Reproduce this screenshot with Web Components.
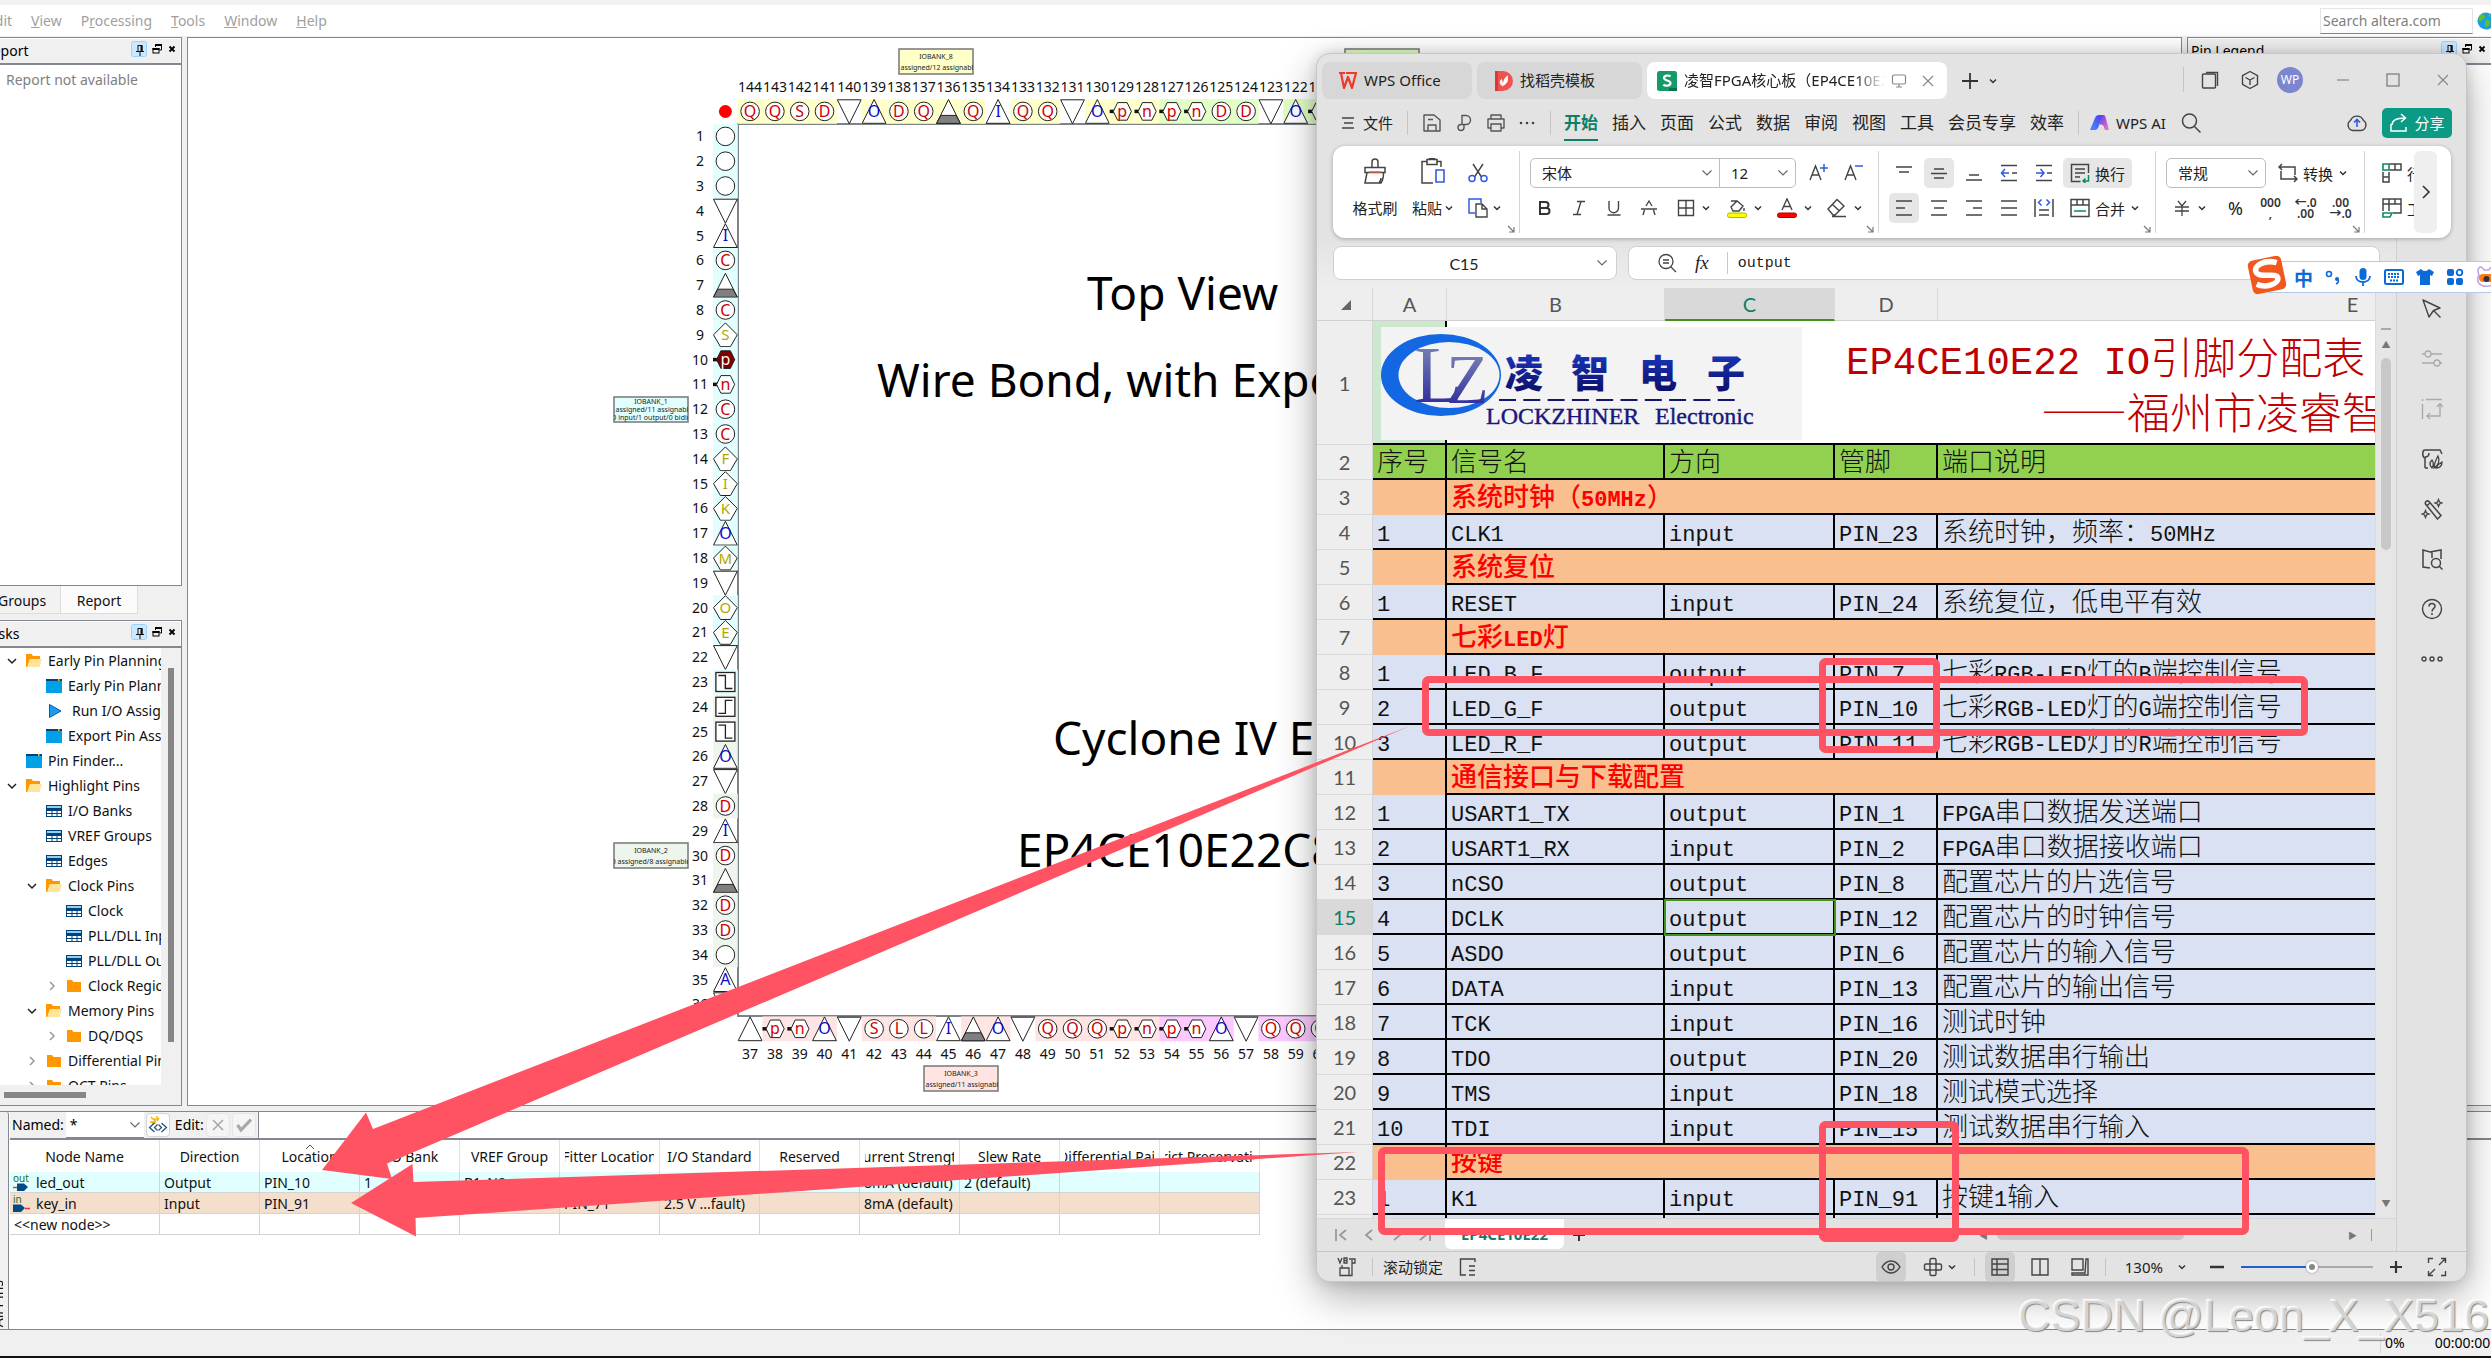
<!DOCTYPE html>
<html lang="zh-CN">
<head>
<meta charset="utf-8">
<title>Pin Planner</title>
<style>
html,body{margin:0;height:100%;overflow:hidden;background:#f0f0f0}
body{font-family:"Noto Sans","Noto Sans CJK SC",sans-serif;font-size:14px;color:#111}
</style>
</head>
<body>
<planner-app></planner-app>
<wps-window></wps-window>
<ime-bar></ime-bar>
<callout-layer></callout-layer>
<water-mark>CSDN @Leon_X_X516</water-mark>
<script>
const BASE = `:host,*{box-sizing:border-box}button,select,input{font:inherit;color:inherit;background:none;border:0;padding:0;margin:0;border-radius:0;outline:0}
button{display:flex;align-items:center;justify-content:center}select{appearance:none}a{color:inherit;text-decoration:none}`;
function define(tag, css, html) {
  customElements.define(tag, class extends HTMLElement {
    connectedCallback() {
      if (this.shadowRoot) return;
      const t = document.createElement('template');
      t.innerHTML = `<style>${BASE}${css}</style>` + (typeof html === 'function' ? html(this) : html);
      this.attachShadow({mode: 'open'}).append(t.content.cloneNode(true));
    }
  });
}

/* ---------- icons: name -> [viewBox size, markup] ---------- */
const ICONS = {
  pin: [16, '<rect x=".5" y=".5" width="15" height="15" rx="2" fill="#cce8ff" stroke="#99d1ff"/><path d="M7 4.500h4v6M7 4v6.500M5 10.500h8M9 11v4" stroke="#111" fill="none"/><path d="M10.500 4v6.500" stroke="#111" stroke-width="2"/>'],
  float: [12, '<path d="M4.500 4V2h6v5H8.500" stroke="#000" fill="none"/><path d="M4 2h7" stroke="#000" stroke-width="2"/><rect x="2" y="5.500" width="6" height="4.500" fill="none" stroke="#000"/><path d="M1.500 6h7" stroke="#000" stroke-width="2"/>'],
  cross: [10, '<path d="M2.500 2.500l5 5M7.500 2.500l-5 5" stroke="#000" stroke-width="1.800"/>'],
  open: [16, '<path d="M0 14V1h5.500l1.500 2h7v3H4L1.500 14z" fill="#ff9800"/><path d="M4 6h12l-2.500 8H1.200z" fill="#ffe49c"/>'],
  folder: [16, '<path d="M1 2h5l1.500 2H15v10H1z" fill="#ff9800"/>'],
  win: [16, '<path d="M0 1h16v14H0z" fill="#00a0e6"/><path d="M0 1h16v2H0z" fill="#00437c"/><path d="M12 1h1.500v2H12z" fill="#ffb41e"/>'],
  play: [16, '<path d="M3.500 1.500L15 8 3.500 14.500z" fill="#1a9bf0" stroke="#0a58b0"/>'],
  table: [16, '<path d="M0 2h16v12H0z" fill="#00437c"/><path d="M1 3h14v2H1z" fill="#8fd0f5"/><path d="M1 8h4.500v2H1zM6.500 8h4v2h-4zM11.500 8H15v2h-3.500zM1 11h4.500v2H1zM6.500 11h4v2h-4zM11.500 11H15v2h-3.500z" fill="#fff"/>'],
  down: [12, '<path d="M2 4l4 4 4-4" fill="none" stroke="#222" stroke-width="1.500"/>'],
  thin: [12, '<path d="M1.500 3.500L6 8l4.500-4.500" fill="none" stroke="#666" stroke-width="1.100"/>'],
  chev: [10, '<path d="M2 3.500l3 3 3-3" fill="none" stroke="#333" stroke-width="1.500"/>'],
  right: [12, '<path d="M4 2l4 4-4 4" fill="none" stroke="#999" stroke-width="1.500"/>'],
  up: [10, '<path d="M1 7l4-4 4 4" fill="none" stroke="#555"/>'],
  find: [20, '<path d="M3 2l3 3M9 1v4M2 7h4M11 3L9 6M4 9l3-3M7 3v6" stroke="#f5b800" stroke-width="1.500"/><path d="M6.500 8l-5 4.500 5 4.500M9.500 9.500l-3 3 3 3M10.500 9.500l3 3-3 3M13.500 8l5 4.500-5 4.500" fill="none" stroke="#234d74" stroke-width="1.200"/>'],
  gx: [16, '<path d="M3 3l10 10M13 3L3 13" stroke="#a5a5a5" stroke-width="1.500"/>'],
  gok: [16, '<path d="M1.500 8l3.500 5L15 2.500" fill="none" stroke="#a8a8a8" stroke-width="3.200"/>'],
  out: [18, '<path d="M4 10.500h7l4 3.500-4 4H4z" fill="#004a86"/><path d="M0 14.500h4" stroke="#e33" stroke-width="1.500"/>'],
  in: [18, '<path d="M0 10.500h8l4 3.500-4 4H0z" fill="#004a86"/><path d="M12 14.500h5" stroke="#e33" stroke-width="1.500"/>'],
  globe: [18, '<circle cx="9" cy="9" r="8.500" fill="#1b9be8"/><path d="M3 3c3-2 5 0 5 2s-3 2-3 4-3-1-4-2zM9 8c3-1 5 1 4 3s-2 5-4 4-1-5 0-7zM11 1l4 3-3 1z" fill="#59c22c"/>'],
  wps: [22, '<path d="M2 3h6M4 3l3 15 4-11 4 11L19 3M9 3h11" fill="none" stroke="#ee3a2b" stroke-width="2.200" stroke-linejoin="round"/>'],
  docer: [22, '<path d="M3 1h8a10 10 0 010 20H3z" fill="#ef5350"/><path d="M3 1h3v20H3z" fill="#d83a3a"/><path d="M11 16C7 14 8 11 9.500 9.500 10 12 11 13 11 16zM11.500 15c0-4 1-7 4-9 0 4 .500 7-4 9z" fill="#fff" stroke="#fff"/>'],
  sheet: [22, '<rect x="1" y="1" width="20" height="20" rx="2.500" fill="#159a68"/><path d="M13 21h8v-3h-8z" fill="#0a7049"/><path d="M14.500 6.500C13 5 8 5 8 8s6.500 2 6.500 5-5.500 3.500-7 1.500" fill="none" stroke="#fff" stroke-width="2.200"/>'],
  monitor: [16, '<rect x="1.500" y="2" width="13" height="9" rx="1.500" fill="none" stroke="#888" stroke-width="1.200"/><path d="M5 14h6M8 11v3" stroke="#888" stroke-width="1.200"/>'],
  x: [14, '<path d="M2 2l10 10M12 2L2 12" stroke="#888" stroke-width="1.200"/>'],
  plus: [18, '<path d="M9 1v16M1 9h16" stroke="#333" stroke-width="1.800"/>'],
  zplus: [14, '<path d="M7 1v12M1 7h12" stroke="#333" stroke-width="2.200"/>'],
  windows: [20, '<path d="M6 2.500h11.500V16" fill="none" stroke="#444" stroke-width="1.400"/><rect x="2.500" y="4" width="13" height="14" rx="1" fill="none" stroke="#444" stroke-width="1.400"/>'],
  cube: [20, '<path d="M10 1.500l7.500 4.200v8.600L10 18.500l-7.500-4.200V5.700zM5.500 7.500L10 10l4.500-2.500M10 10v5" fill="none" stroke="#444" stroke-width="1.400" stroke-linejoin="round"/>'],
  min: [14, '<path d="M1 7h12" stroke="#777" stroke-width="1.200"/>'],
  max: [14, '<rect x="1" y="1" width="12" height="12" fill="none" stroke="#777" stroke-width="1.200"/>'],
  burger: [14, '<path d="M1 2h12M3 7h9M1 12h12" stroke="#444" stroke-width="1.300"/>'],
  save: [20, '<path d="M2 2h10l6 5v11H2zM6 18v-6h8v6M6 6.500h5" fill="none" stroke="#555" stroke-width="1.400" stroke-linejoin="round"/>'],
  pdf: [20, '<path d="M8 11V2.500h4a4.500 4.500 0 010 9H7M7 11.500a3 3 0 103 3v-3" fill="none" stroke="#555" stroke-width="1.400"/>'],
  print: [20, '<path d="M5 6V2h10v4M5 15H2V6h16v9h-3M5 11h10v7H5z" fill="none" stroke="#555" stroke-width="1.400" stroke-linejoin="round"/>'],
  dots: [18, '<circle cx="3" cy="9" r="1.300" fill="#444"/><circle cx="9" cy="9" r="1.300" fill="#444"/><circle cx="15" cy="9" r="1.300" fill="#444"/>'],
  ai: [20, '<defs><linearGradient id="a" x1="0" y1="1" x2="1" y2="0"><stop offset="0" stop-color="#4b8bff"/><stop offset="1" stop-color="#4a3cf0"/></linearGradient><linearGradient id="b" x1="0" y1="0" x2="1" y2="1"><stop offset="0" stop-color="#5a3cf5"/><stop offset="1" stop-color="#ff7bb0"/></linearGradient></defs><path d="M0 17L5 5q1-3 4-3h4L8 15q-1 2-3 2z" fill="url(#a)"/><path d="M12 2h1.500q1.500 0 2 2L19 17h-4l-1.500-4q-.5-1.500-2.500-1.500H9.500z" fill="url(#b)"/>'],
  search: [22, '<circle cx="9.500" cy="9" r="7" fill="none" stroke="#444" stroke-width="1.500"/><path d="M14.500 14.500l6 6" stroke="#444" stroke-width="1.500"/>'],
  cloud: [22, '<path d="M7 18.500a5.500 5.500 0 01-2.500-10 7 7 0 0113 0A5.500 5.500 0 0115 18.500z" fill="none" stroke="#444" stroke-width="1.400"/><path d="M11 15V8M8 10.500L11 7.500l3 3" fill="none" stroke="#2f5be0" stroke-width="1.600"/>'],
  share: [20, '<path d="M2 11v7h15v-4M3 12c0-5 5-7 13-7M12 1l4.500 4-4.500 4" fill="none" stroke="#fff" stroke-width="1.500"/>'],
  brush: [26, '<path d="M10 9V4a3 3 0 016 0v5M3 9.500h20v5H3zM5 14.500L3 25h16c2-3 2.500-6 2.500-10.500M17 25c1.500-2 2-3 2-5" fill="none" stroke="#444" stroke-width="1.500"/><path d="M7 14h12" stroke="#e0662d" stroke-width="1.500"/>'],
  paste: [26, '<path d="M7 3.500H2V25h11M17 3.500h4V9M7 1.500h10v5H7zM9.500 2V.500h5V2" fill="none" stroke="#444" stroke-width="1.500"/><path d="M16 12h8v12h-8z" fill="none" stroke="#2f5be0" stroke-width="1.600"/>'],
  cut: [20, '<path d="M5 1l8.500 13M15 1L6.500 14" stroke="#444" stroke-width="1.400"/><circle cx="4" cy="15.500" r="3" fill="none" stroke="#2f5be0" stroke-width="1.500"/><circle cx="16" cy="15.500" r="3" fill="none" stroke="#2f5be0" stroke-width="1.500"/>'],
  copy: [20, '<path d="M13 5V1H1v14h6" fill="none" stroke="#2f5be0" stroke-width="1.500"/><path d="M8 6h6l5 5v8H8zM14 6v5h5" fill="#fff" stroke="#444" stroke-width="1.400"/>'],
  aplus: [20, '<path d="M2 17L7.500 3 13 17M4 12h7" fill="none" stroke="#444" stroke-width="1.400"/><path d="M12 5h8M16 1v8" stroke="#2f5be0" stroke-width="1.500"/>'],
  aminus: [20, '<path d="M2 17L7.500 3 13 17M4 12h7" fill="none" stroke="#444" stroke-width="1.400"/><path d="M12 3h8" stroke="#2f5be0" stroke-width="1.500"/>'],
  bold: [18, '<path d="M5 3h5.500a3 3 0 010 6H5zM5 9h6.500a3 3 0 010 6H5z" fill="none" stroke="#333" stroke-width="2"/>'],
  italic: [18, '<path d="M7 2.500h8M3 15.500h8M11 2.500L7 15.500" fill="none" stroke="#444" stroke-width="1.400"/>'],
  under: [18, '<path d="M4 2v7a4.500 4.500 0 009.500 0V2M2.500 16h13" fill="none" stroke="#444" stroke-width="1.400"/>'],
  strike: [18, '<path d="M6 7l3-5 3 5M4.500 11L3 16M13.500 11L15 16M1 10h16" fill="none" stroke="#444" stroke-width="1.400"/>'],
  border: [18, '<path d="M1.500 1.500h15v15h-15zM9 1.500v15M1.500 9h15" fill="none" stroke="#444" stroke-width="1.400"/>'],
  fill: [20, '<path d="M4 9l6-6 6 5-4 5H6zM4 3h6M17 10v3" fill="none" stroke="#444" stroke-width="1.400"/><rect x=".5" y="15" width="19" height="4.500" rx="2" fill="#ff0" stroke="#b5b500"/>'],
  fcolor: [20, '<path d="M5 12L10 .800 15 12M7 8.500h6" fill="none" stroke="#444" stroke-width="1.400"/><rect x=".5" y="15" width="19" height="4.500" rx="2" fill="#f00" stroke="#b50000"/>'],
  eraser: [20, '<path d="M1 11L10 1.500 17 8l-9 9H6zM5.500 6.500l7 6.500M5 18.500h14" fill="none" stroke="#444" stroke-width="1.400"/>'],
  launch: [8, '<path d="M1 1l6 6M7 2v5H2" fill="none" stroke="#777" stroke-width="1.200"/>'],
  vtop: [18, '<path d="M1 3h16M4 8h10" stroke="#444" stroke-width="1.500"/>'],
  vmid: [18, '<path d="M4 5h10M1 9.500h16M4 14h10" stroke="#444" stroke-width="1.500"/>'],
  vbot: [18, '<path d="M4 11h10M1 16h16" stroke="#444" stroke-width="1.500"/>'],
  outdent: [18, '<path d="M1 1.500h16M1 16.500h16M12 9h5" stroke="#444" stroke-width="1.500"/><path d="M5 5L1.500 9 5 13M1.500 9H9" fill="none" stroke="#2f5be0" stroke-width="1.500"/>'],
  indent: [18, '<path d="M1 1.500h16M1 16.500h16M12 9h5" stroke="#444" stroke-width="1.500"/><path d="M5.500 5L9 9l-3.500 4M9 9H1" fill="none" stroke="#2f5be0" stroke-width="1.500"/>'],
  wrap: [20, '<path d="M18.500 10V1.500h-17v17h9M5 6h10M5 10h10M5 14h5" fill="none" stroke="#444" stroke-width="1.500"/><path d="M18.500 12v6h-5M15.500 15.500l-2.500 2.500 2.500 2" fill="none" stroke="#0d8a62" stroke-width="1.500"/>'],
  left: [18, '<path d="M1 2h16M1 9h9M1 16h16" stroke="#444" stroke-width="1.500"/>'],
  center: [18, '<path d="M1 2h16M4 9h10M1 16h16" stroke="#444" stroke-width="1.500"/>'],
  ralign: [18, '<path d="M1 2h16M8 9h9M1 16h16" stroke="#444" stroke-width="1.500"/>'],
  justify: [18, '<path d="M1 2h16M1 9h16M1 16h16" stroke="#444" stroke-width="1.500"/>'],
  dist: [20, '<path d="M1 1v18M19 1v18M5 12h10M5 17h10" stroke="#444" stroke-width="1.500"/><path d="M7.500 1.500L4.500 4.500l3 3M12.500 1.500l3 3-3 3" fill="none" stroke="#2f5be0" stroke-width="1.500"/>'],
  merge: [20, '<path d="M1 1.500h18v17H1zM1 7h18M7 1.500V7M13 1.500V7" fill="none" stroke="#444" stroke-width="1.500"/><path d="M4 13h12" stroke="#0d8a62" stroke-width="1.600"/>'],
  convert: [20, '<path d="M4 1L1 4l3 3M1 4h16v8M16 19l3-3-3-3M19 16H3V8" fill="none" stroke="#444" stroke-width="1.500"/>'],
  yen: [18, '<path d="M5 2l4 5 4-5M2 8h14M2 12h14M9 7v10" fill="none" stroke="#444" stroke-width="1.300"/>'],
  rows: [20, '<path d="M7.500 1H19v6H7.500M13 1v6M1 9v10h6V9M1 14h6" fill="none" stroke="#444" stroke-width="1.500"/><path d="M1 1h6v6H1z" fill="none" stroke="#0d8a62" stroke-width="1.600"/>'],
  tbl: [20, '<path d="M1 13V1h18v14h-8M1 6h18M7 1v12M13 1v5" fill="none" stroke="#444" stroke-width="1.500"/><path d="M1 15h9l-2 4H1z" fill="none" stroke="#0d8a62" stroke-width="1.600"/>'],
  more: [14, '<path d="M4 1l6 6-6 6" fill="none" stroke="#333" stroke-width="1.600"/>'],
  zoomin: [20, '<circle cx="9" cy="8.500" r="7" fill="none" stroke="#444" stroke-width="1.300"/><path d="M6 7h6M6 10h6M14 14l5 5" stroke="#444" stroke-width="1.300"/>'],
  cursor: [22, '<path d="M2 2l17 8-6.500 2.500L8 19zM12.500 12.500l7 7" fill="none" stroke="#444" stroke-width="1.400" stroke-linejoin="round"/>'],
  sliders: [22, '<circle cx="7" cy="6" r="3" fill="none" stroke="#aaa" stroke-width="1.300"/><circle cx="16" cy="15" r="3" fill="none" stroke="#aaa" stroke-width="1.300"/><path d="M1 6h3M10 6h11M1 15h12M19 15h2" stroke="#aaa" stroke-width="1.300"/>'],
  crop: [22, '<path d="M1.500 1v2M1.500 6v15M5 1.500h16M19 7v11H7M16 9l3-3.500L22 9M9 15l-3 3 3 3" fill="none" stroke="#aaa" stroke-width="1.400"/>'],
  gallery: [22, '<path d="M4 20V10C1 9 1 2 4 2h15l2 4M4 20h3M4 9c3 0 4-1 4-4" fill="none" stroke="#444" stroke-width="1.500"/><path d="M11 20c-3-3-2-6 0-8 2 3 2 5 0 8zM13 20c0-5 2-8 4-12 2 4 1 9-4 12zM15 20c2-4 4-5 6-6 0 4-2 6-6 6z" fill="none" stroke="#444" stroke-width="1.300"/>'],
  tools: [22, '<path d="M4.500 6a2.200 2.200 0 013.500-2.500L20 17.500 16.500 21zM5.500 8L9 5" fill="none" stroke="#444" stroke-width="1.500"/><path d="M17.500 1.500L18.500 4l2.500 1-2.500 1-1 2.500-1-2.500L14 5l2.500-1zM4.500 12.500l1 2.500L8 16l-2.500 1-1 2.500-1-2.500L1 16l2.500-1z" fill="none" stroke="#444" stroke-width="1.300"/>'],
  book: [22, '<path d="M9 20l-7-1V2l7 2 11-2v9M11 4v6" fill="none" stroke="#444" stroke-width="1.500"/><circle cx="15" cy="15" r="4.500" fill="none" stroke="#444" stroke-width="1.500"/><path d="M18 18l3.500 3.500" stroke="#444" stroke-width="1.500"/>'],
  help: [22, '<circle cx="11" cy="11" r="9.500" fill="none" stroke="#444" stroke-width="1.400"/><path d="M8 8.500c0-4 6-4 6 0 0 2-3 2-3 5M11 15v2" fill="none" stroke="#444" stroke-width="1.500"/>'],
  dots3: [22, '<g fill="none" stroke="#444" stroke-width="1.400"><circle cx="3" cy="11" r="2"/><circle cx="11" cy="11" r="2"/><circle cx="19" cy="11" r="2"/></g>'],
  nfirst: [16, '<path d="M3 2v12M13 3L7 8l6 5" fill="none" stroke="#999" stroke-width="1.800"/>'],
  nprev: [16, '<path d="M11 3L5 8l6 5" fill="none" stroke="#999" stroke-width="1.800"/>'],
  nnext: [16, '<path d="M5 3l6 5-6 5" fill="none" stroke="#999" stroke-width="1.800"/>'],
  nlast: [16, '<path d="M13 2v12M3 3l6 5-6 5" fill="none" stroke="#999" stroke-width="1.800"/>'],
  vb: [20, '<path d="M3 18.500V11h9v7.500zM5 11V8M12 18.500h3V3M1 1l2 5 2-5M7 1v5h3V1zM7 3.500h3M12 2h6v4h-3" fill="none" stroke="#444" stroke-width="1.300"/>'],
  outline: [18, '<path d="M16 4V1H1.500v16H7M10 8h6M10 12.500h6M10 17h6" fill="none" stroke="#444" stroke-width="1.400"/>'],
  eye: [20, '<path d="M1 10c5-8 13-8 18 0-5 8-13 8-18 0z" fill="none" stroke="#444" stroke-width="1.400"/><circle cx="10" cy="10" r="3" fill="none" stroke="#444" stroke-width="1.400"/>'],
  target: [20, '<path d="M7 7V3q0-1.500 1.500-1.500h3Q13 1.500 13 3v4h4q1.500 0 1.500 1.500v3q0 1.500-1.500 1.500h-4v4q0 1.500-1.500 1.500h-3Q7 18.500 7 17v-4H3q-1.500 0-1.500-1.500v-3Q1.500 7 3 7z" fill="none" stroke="#444" stroke-width="1.400"/><rect x="7" y="7" width="6" height="6" fill="none" stroke="#444" stroke-width="1.400"/>'],
  grid: [18, '<path d="M1 1h16v16H1zM1 6h16M6 1v16M1 11.500h16" fill="none" stroke="#444" stroke-width="1.400"/>'],
  two: [18, '<path d="M1 1h16v16H1zM9 1v16" fill="none" stroke="#444" stroke-width="1.400"/>'],
  page: [18, '<path d="M1 12V1h11v11zM15 1h2v16H1v-2h13z" fill="none" stroke="#444" stroke-width="1.400"/>'],
  sub: [16, '<path d="M1 8h14" stroke="#333" stroke-width="2.500"/>'],
  add: [14, '<path d="M1 7h12M7 1v12" stroke="#333" stroke-width="2"/>'],
  full: [20, '<path d="M1.500 6V1.500H6M14 1.500h4.500V6M6 18.500H1.500V14M18.500 14v4.500H14M12 8l6-6M8 12l-6 6" fill="none" stroke="#444" stroke-width="1.400"/>'],
  sogou: [42, '<g transform="rotate(-12 21 21)"><rect x="4" y="4" width="34" height="34" rx="5" fill="#f2571d"/><path d="M33 11C22 5 9 9 11 16s20 4 20 10-14 8-22 2" fill="none" stroke="#fff" stroke-width="5.500"/></g>'],
  punct: [18, '<circle cx="5" cy="6" r="2.500" fill="none" stroke="#0b6bd6" stroke-width="1.600"/><circle cx="13" cy="11" r="2" fill="#0b6bd6"/><path d="M14 11c1 2 0 4-2 5" fill="none" stroke="#0b6bd6" stroke-width="1.500"/>'],
  mic: [20, '<rect x="6.500" y="1" width="7" height="12" rx="3.500" fill="#0b6bd6"/><path d="M3 9c0 8 14 8 14 0M10 15v4" fill="none" stroke="#0b6bd6" stroke-width="1.800"/>'],
  kbd: [20, '<rect x="1" y="3" width="18" height="14" rx="1.500" fill="none" stroke="#0b6bd6" stroke-width="2"/><path d="M4 7h12M4 10h12M6 13.500h8" stroke="#0b6bd6" stroke-width="2" stroke-dasharray="2 1"/>'],
  shirt: [20, '<path d="M6 2c2 2.500 6 2.500 8 0l5 3-2 4-2-1v10H5V8L3 9 1 5z" fill="#0b6bd6"/>'],
  apps: [18, '<rect x="1" y="1" width="7" height="7" rx="2" fill="#0b6bd6"/><circle cx="13.500" cy="4.500" r="2.800" fill="none" stroke="#0b6bd6" stroke-width="1.800"/><rect x="1" y="10" width="7" height="7" rx="2" fill="#0b6bd6"/><rect x="10" y="10" width="7" height="7" rx="2" fill="#0b6bd6"/>'],
  face: [24, '<path d="M4 10C1 3 6-1 9 5h5c3-6 8-2 5 5 8 15-23 15-15 0z" fill="#fff" stroke="#c9a0e0" stroke-width="1.600"/><rect x="4" y="9" width="15" height="8" rx="4" fill="#ff7a1a"/><circle cx="11.500" cy="14" r="3" fill="#333"/>']
};
customElements.define('ui-icon', class extends HTMLElement {
  connectedCallback() {
    if (this.shadowRoot) return;
    const [s, m] = ICONS[this.getAttribute('name')];
    this.attachShadow({mode: 'open'}).innerHTML =
      `<style>:host{display:inline-flex;flex:none}svg{display:block}</style><svg width="${s}" height="${s}" viewBox="0 0 ${s} ${s}" aria-hidden="true">${m}</svg>`;
  }
});
const ic = n => `<ui-icon name="${n}"></ui-icon>`;

/* ---------- planner ---------- */
define('planner-app', `
:host{display:flex;flex-direction:column;height:100vh;background:#f0f0f0;border-top:5px solid #f2f2f2;border-bottom:2px solid #111}
.main{flex:1;display:flex;gap:5px;min-height:0;border-top:1px solid #f0f0f0}
.col{width:182px;flex:none;display:flex;flex-direction:column}
.report{height:549px;flex:none}
.none{padding:5px 0 0 6px;color:#808080;line-height:20px}
.tabs{display:flex;height:34px;align-items:flex-start;overflow:hidden;flex:none}
.tabs button{height:28px;padding:2px 14px 0 0;border-bottom:1px solid #ddd;background:#f2f2f2}
.tabs .g{margin-left:-2px;width:62px;justify-content:flex-start}
.tabs .on{width:78px;padding:2px 0 0;background:#fbfbfb;border:1px solid #ddd;border-top:0}
.tasks{flex:1;min-height:0}
.legend{width:304px;flex:none}
pin-canvas{flex:1}
node-pane{height:219px;margin-top:5px;flex:none}
`, `
<planner-menu></planner-menu>
<div class="main">
 <div class="col">
  <dock-panel class="report" caption="Report" cut><div class="none">Report not available</div></dock-panel>
  <div class="tabs"><button class="g">Groups</button><button class="on">Report</button></div>
  <dock-panel class="tasks" caption="Tasks" cut><task-tree></task-tree></dock-panel>
 </div>
 <pin-canvas></pin-canvas>
 <dock-panel class="legend" caption="Pin Legend"></dock-panel>
</div>
<node-pane></node-pane>
<status-line></status-line>`);

define('planner-menu', `
:host{display:flex;align-items:center;height:31px;background:#fff;color:#a0a0a0;flex:none}
nav{display:flex;gap:19px;margin-left:-13px;flex:1}
.s{display:flex;align-items:center;gap:4px;margin-right:-4px}
input{width:153px;height:26px;border:1px solid #e4e4e4;border-bottom-color:#868686;padding:0 2px;background:#fff}
input::placeholder{color:#808080;opacity:1}
`, `<nav><a href="#">Edit</a><a href="#"><u>V</u>iew</a><a href="#">P<u>r</u>ocessing</a><a href="#"><u>T</u>ools</a><a href="#"><u>W</u>indow</a><a href="#"><u>H</u>elp</a></nav>
<div class="s"><input aria-label="Search" placeholder="Search altera.com">${ic('globe')}</div>`);

define('dock-panel', `
:host{display:flex;flex-direction:column;background:#fff;border:1px solid #828790;border-left:0;overflow:hidden}
:host(.legend){border-left:1px solid #828790;border-right:0}
header{display:flex;align-items:center;height:27px;flex:none;border-bottom:2px solid #828790;background:#f0f0f0;box-shadow:inset 0 1px #fff,inset -1px 0 #fff}
h2{flex:1;margin:0 0 0 3px;font-size:14px;font-weight:400;line-height:24px;color:#000}
:host([cut]) h2{margin-left:-16px}
.b{display:flex;align-items:center;gap:4px;margin:0 4px 4px 0}
::slotted(task-tree){flex:1}
`, el => `<header><h2>${el.getAttribute('caption')}</h2><div class="b"><button aria-label="Auto hide">${ic('pin')}</button><button aria-label="Float">${ic('float')}</button><button aria-label="Close">${ic('cross')}</button></div></header><slot></slot>`);

const TREE = [
  [0,'down','open','Early Pin Planning'],[1,'','win','Early Pin Planning'],[1,'','play','Run I/O Assignment'],[1,'','win','Export Pin Assign'],
  [0,'','win','Pin Finder...'],[0,'down','open','Highlight Pins'],[1,'','table','I/O Banks'],[1,'','table','VREF Groups'],[1,'','table','Edges'],
  [1,'down','open','Clock Pins'],[2,'','table','Clock'],[2,'','table','PLL/DLL Input'],[2,'','table','PLL/DLL Output'],[2,'right','folder','Clock Regions'],
  [1,'down','open','Memory Pins'],[2,'right','folder','DQ/DQS'],[1,'right','folder','Differential Pins'],[1,'right','folder','OCT Pins']];
define('task-tree', `
:host{display:grid;grid-template:minmax(0,1fr) 20px/161px 1fr;min-height:0;background:#f0f0f0}
ul{margin:0;padding:0;list-style:none;background:#fff;overflow:hidden;color:#111}
li{display:flex;align-items:center;height:25px;white-space:nowrap;padding-left:calc(6px + var(--d)*20px)}
i{width:20px;flex:none;display:flex}span{margin-left:6px;flex:none}
.play span{margin-left:10px}
.v{padding:20px 0 43px 7px}.v b{display:block;width:6px;height:100%;background:#868686}
.h{grid-column:1/3;padding:7px 4px}.h b{display:block;width:82px;height:6px;background:#868686}
`, () => `<ul>${TREE.map(([d,c,i,t]) => `<li class="${i}" style="--d:${d}"><i>${c ? ic(c) : ''}</i>${ic(i)}<span>${t}</span></li>`).join('')}</ul><div class="v"><b></b></div><div class="h"><b></b></div>`);

/* Package view: pins sit on a free canvas, pitch 24.8 */
const P = 24.8;
function pin(cx, cy, spec, bg) {
  const [k, t = ''] = spec.split(':'); let s = '';
  const L = cx - 12.4, T = cy - 12.4, R = cx + 12.4, D = cy + 12.4;
  if (bg) s += `<rect x="${L}" y="${T}" width="24.8" height="24.8" fill="${bg}"/>`;
  const st = 'fill="#fff" stroke="#222" stroke-width="1"';
  let col = '#d00000', f = 16, dy = 5.5;
  if (k === 'c') s += `<circle cx="${cx}" cy="${cy}" r="9.300" ${st}/>`;
  if (k === 'v') s += `<path d="M${L+.5} ${T+.8}H${R-.5}L${cx} ${D}z" ${st}/>`;
  if (k === 't' || k === 'g') { s += `<path d="M${cx} ${T+.5}L${R-.5} ${D-.5}H${L+.5}z" ${st}/>`; col = '#0a0ad0'; }
  if (k === 'g') s += `<path d="M${cx-7.600} ${cy+4}h15.200l4.300 8h-23.800z" fill="#808080" stroke="#222"/>`;
  if (k === 'd') { s += `<path d="M${cx} ${T+.5}L${R-.5} ${cy}L${cx+5} ${D-.5}H${cx-5}L${L+.5} ${cy}z" ${st}/>`; col = '#b0a800'; f = 15; }
  if (k === 'h' || k === 'H') {
    s += `<path d="M${L} ${cy}h6" stroke="#111" stroke-width="3.500"/><path d="M${cx-4.500} ${cy-8.800}h9.500l4.300 8.800-4.300 8.800h-9.500l-4.300-8.800z" fill="${k === 'H' ? '#7d0000' : '#fff'}" stroke="#222"/>`;
    if (k === 'H') col = '#fff';
  }
  if (k === 's') s += `<rect x="${cx-9.500}" y="${cy-9.500}" width="19" height="19" fill="#fff" stroke="#222" stroke-width="1.300"/><path d="${t === 'f' ? `M${cx-7} ${cy-6.500}h7v13h7` : `M${cx-7} ${cy+6.500}h7v-13h7`}" fill="none" stroke="#222" stroke-width="1.300"/>`;
  else if (t) s += `<text x="${cx}" y="${cy+dy}" font-size="${f}" fill="${col}" text-anchor="middle">${t}</text>`;
  return s;
}
function bank(x, y, fill, lines, id) {
  const step = lines.length > 2 ? 8 : 11, y0 = lines.length > 2 ? 7 : 10;
  return `<clipPath id="${id}"><rect x="${x}" y="${y}" width="74" height="25"/></clipPath><rect x="${x}" y="${y}" width="74" height="25" fill="${fill}" stroke="#777" stroke-width="1.500"/><g clip-path="url(#${id})" font-size="7" text-anchor="middle" fill="#222">${lines.map((l, i) => `<text x="${x+37}" y="${y+y0+i*step}">${l}</text>`).join('')}</g>`;
}
define('pin-canvas', `
:host{display:block;background:#fff;border:1px solid #828790;overflow:hidden;min-width:0}
svg{display:block;font-family:"Noto Sans",sans-serif}`, () => {
  const Y = '#ffffc8', GR = '#e2ffc6', CY = '#e1ffff', G2 = '#edf5ec', PK = '#ffe4e4', MG = '#fcc8ff';
  const top = 'c:Q c:Q c:S c:D v t:O c:D c:Q g c:Q t:I c:Q c:Q v t:O h:p h:n h:p h:n c:D c:D v t:O h:p'.split(' ');
  const left = 'c c c v t:I c:C g c:C d:S H:p h:n c:C c:C d:F d:I d:K t:O d:M v d:O d:E v s:f s:r s:f t:O v c:D t:I c:D g c:D c:D c t:A v'.split(' ');
  const bot = 't h:p h:n t:O v c:S c:L c:L t:I g t:O v c:Q c:Q c:Q h:p h:n h:p h:n t:O v c:Q c:Q c:Q'.split(' ');
  const bare = s => s === 'v' || s === 't:I' || s === 't:A' || s === 't';
  let s = '', n = '';
  top.forEach((k, i) => { const x = 750.1 + i*P; s += pin(x, 111.4, k, bare(k) ? '' : i < 17 ? Y : GR); n += `<text x="${x}" y="92">${144-i}</text>`; });
  left.forEach((k, i) => { const y = 136.4 + i*P; s += pin(725.4, y, k, bare(k) ? '' : i < 23 ? CY : G2); n += `<text x="700" y="${y+5}">${i+1}</text>`; });
  bot.forEach((k, i) => { const x = 750.1 + i*P; s += pin(x, 1028.8, k, bare(k) ? '' : i < 17 ? PK : MG); n += `<text x="${x}" y="1059">${37+i}</text>`; });
  return `<svg width="1260" height="1066" viewBox="188 38 1260 1066">
  <path d="M1500 124H738V1016H1500" fill="none" stroke="#7d8386" stroke-width="2"/>
  <circle cx="725.400" cy="111.500" r="6.500" fill="#f00"/>${s}
  <g font-size="14" text-anchor="middle" fill="#111">${n}</g>
  ${bank(899,49,'#ffffc8',['IOBANK_8','0 assigned/12 assignable'],'k8')}${bank(1345,49,'#e2ffc6',['IOBANK_7','0 assigned/11 assignable'],'k7')}
  ${bank(614,397,'#e1ffff',['IOBANK_1','1 assigned/11 assignable','0 input/1 output/0 bidir'],'k1')}${bank(614,843,'#edf5ec',['IOBANK_2','0 assigned/8 assignable'],'k2')}${bank(924,1066,'#ffe4e4',['IOBANK_3','0 assigned/11 assignable'],'k3')}
  <g font-size="46" fill="#000"><text x="1087" y="310">Top View</text><text x="877" y="397">Wire Bond, with Exposed Pad</text><text x="1053" y="755">Cyclone IV E</text><text x="1017" y="867">EP4CE10E22C8</text></g></svg>`;
});

define('node-pane', `
:host{display:flex;border-top:1px solid #828790;border-bottom:1px solid #828790;background:#f0f0f0}
.side{width:9px;flex:none;border-right:1px solid #828790;border-radius:0 3px 0 0;overflow:hidden;display:flex;align-items:flex-end}
.side span{writing-mode:vertical-rl;rotate:180deg;line-height:18px;margin:0 0 2px -11px}
.pane{flex:1;min-width:0;display:flex;flex-direction:column;border-left:1px solid #fff}
.bar{display:flex;align-items:center;height:26px;color:#000;padding-left:2px;flex:none}
.bar label{line-height:24px}
.sel{display:grid;width:78px;height:26px;background:#fff;border-bottom:1px solid #868686;margin:0 2px;align-items:center}
.sel>*{grid-area:1/1}.sel select{padding-left:4px;width:100%}.sel ui-icon{justify-self:end;margin-right:3px;pointer-events:none}
.bar button{width:24px;height:24px;border:1px solid #d5d5d5;border-radius:4px;background:#fdfdfd}
.bar .e{margin:0 2px 0 5px}.bar .off{background:#f5f5f5;border-color:#e6e6e6;margin-right:2px}
.bar input{flex:1;align-self:stretch;background:#fff;border-left:1px solid #828790}
.t{flex:1;background:#fff;border-top:2px solid #828790}
table{border-collapse:separate;border-spacing:0;table-layout:fixed;width:1250px;color:#111}
th{height:32px;padding:0 5px;font-weight:400;border-right:1px solid #e0e0e0}
th div{display:flex;justify-content:center;overflow:hidden;white-space:nowrap;padding-top:1px}
th small{display:flex;justify-content:center;height:4px;margin-top:-4px}
th div span{flex:none}
td{height:21px;padding:1px 4px 0;line-height:19px;border-right:1px solid #d4d4d4;border-bottom:1px solid #d4d4d4;white-space:nowrap;overflow:hidden}
.o td{background:#e1ffff}.k td{background:#f4dfcd}
.n{display:flex;align-items:center;gap:5px;margin-left:-1px}
.io{display:grid;width:18px;height:19px}.io>*{grid-area:1/1}.io b{font-size:10px;line-height:10px;font-weight:400;color:#1c6b2c}
`, () => {
  const H = ['Node Name','Direction','Location','I/O Bank','VREF Group','Fitter Location','I/O Standard','Reserved','Current Strength','Slew Rate','Differential Pair','Strict Preservation'];
  const node = (i, t) => `<div class="n"><span class="io"><b>${i}</b>${ic(i)}</span>${t}</div>`;
  const R = [['o', node('out','led_out'),'Output','PIN_10','1','B1_N0','','','','8mA (default)','2 (default)','',''],
    ['k', node('in','key_in'),'Input','PIN_91','','','PIN_71','2.5 V ...fault)','','8mA (default)','','',''],
    ['', '&lt;&lt;new node&gt;&gt;','','','','','','','','','','','']];
  return `<div class="side"><span>All Pins</span></div><div class="pane"><div class="bar"><label for="nm">Named:</label><div class="sel"><select id="nm"><option>*</option></select>${ic('thin')}</div><button aria-label="Find">${ic('find')}</button><label class="e" for="ed">Edit:</label><button class="off" aria-label="Cancel">${ic('gx')}</button><button class="off" aria-label="Accept">${ic('gok')}</button><input id="ed"></div>
  <div class="t"><table><colgroup><col style="width:150px">${'<col style="width:100px">'.repeat(11)}</colgroup><thead><tr>${H.map(h => `<th>${h === 'Location' ? `<small>${ic('up')}</small>` : ''}<div><span>${h}</span></div></th>`).join('')}</tr></thead><tbody>${R.map(([c, ...v]) => `<tr class="${c}">${v.map(x => `<td>${x}</td>`).join('')}</tr>`).join('')}</tbody></table></div></div>`;
});
define('status-line', `:host{display:flex;justify-content:flex-end;height:26px;flex:none;overflow:hidden;background:#f0f0f0;color:#000;align-items:center}
div{border-left:1px solid #d5d5d5;padding-left:4px;display:flex;gap:30px;width:111px;line-height:20px;white-space:nowrap}`, `<div><span>0%</span><span>00:00:00</span></div>`);

/* ---------- spreadsheet window ---------- */
define('wps-window', `
:host{position:absolute;left:1316px;top:53px;width:1151px;height:1229px;display:flex;flex-direction:column;background:#e3e3e3;border:1px solid #c6c6c6;border-radius:14px;box-shadow:0 14px 40px rgba(0,0,0,.32),0 0 14px rgba(0,0,0,.14);overflow:hidden;font-size:15px;color:#222;font-family:"Noto Sans","Noto Sans CJK SC",sans-serif}
.mid{flex:1;display:flex;min-height:0}
.work{width:1079px;display:flex;flex-direction:column;flex:none;background:linear-gradient(#e3e3e3,#eee 50px)}
`, `<wps-tabs></wps-tabs><wps-menu></wps-menu><wps-ribbon></wps-ribbon>
<div class="mid"><div class="work"><formula-bar></formula-bar><sheet-view></sheet-view><sheet-tabs></sheet-tabs></div><side-tools></side-tools></div><wps-status></wps-status>`);

define('wps-tabs', `
:host{display:flex;align-items:center;height:45px;padding:8px 0 0 5px;flex:none}
.tab{height:37px;border-radius:8px;background:#d7d7d7;display:flex;align-items:center;padding:0 15px;margin-right:5px;white-space:nowrap;gap:6px;justify-content:flex-start}
.tab span{line-height:22px;margin-bottom:2px}
.a{width:150px;gap:5px}.b{width:165px}.c{width:300px;background:#fff;padding:0 9px}
.c span{flex:1;overflow:hidden;text-align:left;mask-image:linear-gradient(90deg,#000 85%,transparent)}
.c ui-icon:last-child{margin:0 3px 0 8px}
.p{margin:0 0 0 9px}.q{margin-left:9px;flex:1;justify-content:flex-start}
.r{display:flex;align-items:center;height:25px;border-left:1px solid #c5c5c5;padding-left:16px;margin:0 -2px 2px 0}
.r button{width:20px;margin-right:20px}
.r .w{width:26px;height:26px;margin:0 15px 0 -3px;border-radius:50%;background:#7c86cf;color:#fff;font-size:12px}
.r .m{width:50px;margin:0;height:20px}
`, `<button class="tab a">${ic('wps')}<span>WPS Office</span></button><button class="tab b">${ic('docer')}<span>找稻壳模板</span></button><button class="tab c">${ic('sheet')}<span>凌智FPGA核心板（EP4CE10E22）引脚</span>${ic('monitor')}${ic('x')}</button>
<button class="p" aria-label="New">${ic('plus')}</button><button class="q" aria-label="Tabs">${ic('chev')}</button>
<div class="r"><button aria-label="Windows">${ic('windows')}</button><button aria-label="Apps">${ic('cube')}</button><button class="w">WP</button><button class="m" aria-label="Minimize">${ic('min')}</button><button class="m" aria-label="Maximize">${ic('max')}</button><button class="m" aria-label="Close">${ic('x')}</button></div>`);

define('wps-menu', `
:host{display:flex;align-items:center;height:47px;padding-left:24px;flex:none}
.f{gap:8px}hr{width:1px;height:24px;border:0;background:#c5c5c5;margin:0 14px}
.q{display:flex;gap:12px;align-items:center}
nav{display:flex;gap:14px;font-size:17px;margin-left:-1px}
nav a{line-height:32px;white-space:nowrap}nav .on{font-weight:700;color:#0c7f68;box-shadow:0 2px #0c7f68}
.ai{gap:6px;white-space:nowrap;margin-left:-3px}.s{margin-left:14px;flex:1;justify-content:flex-start}
.sh{width:70px;height:30px;background:#0b9a83;color:#fff;border-radius:5px;gap:5px;margin:0 14px 0 14px}
`, `<button class="f">${ic('burger')}文件</button><hr><div class="q"><button aria-label="Save">${ic('save')}</button><button aria-label="PDF">${ic('pdf')}</button><button aria-label="Print">${ic('print')}</button><button aria-label="More">${ic('dots')}</button></div><hr>
<nav>${['开始','插入','页面','公式','数据','审阅','视图','工具','会员专享','效率'].map((t, i) => `<a href="#" class="${i ? '' : 'on'}">${t}</a>`).join('')}</nav><hr><button class="ai">${ic('ai')}WPS AI</button><button class="s" aria-label="Search">${ic('search')}</button><button aria-label="Cloud">${ic('cloud')}</button><button class="sh">${ic('share')}分享</button>`);

const cell = n => `<button class="i" aria-label="${n}">${ic(n)}</button>`;
const drop = n => `<button class="d" aria-label="${n}">${ic(n)}${ic('chev')}</button>`;
define('wps-ribbon', `
:host{display:flex;height:92px;margin:0 15px 0 16px;padding:5px 14px 5px 0;background:#fff;border-radius:12px;box-shadow:0 1px 4px rgba(0,0,0,.28);flex:none;position:relative}
section{position:relative;border-right:1px solid #d5d5d5;padding-top:7px;flex:none}
section>ui-icon{position:absolute;right:4px;bottom:0}
.row{display:flex;height:30px;align-items:center;margin-bottom:5px}
.g1{width:187px;display:flex;padding-left:13px}
.g1 .big{flex-direction:column;width:58px;height:65px;justify-content:space-between}.big span{display:flex;align-items:center;gap:2px;white-space:nowrap;line-height:30px}
.g1 .c{padding-left:6px}.g1 .c .row{gap:4px}
.g2{width:359px;padding-left:6px}.g3{width:277px;padding-left:10px}.g4{width:209px;padding-left:10px}
.i{width:35px;height:30px}.d{width:50px;height:30px;gap:6px;flex:none;justify-content:flex-start;padding-left:11px}
.g2 .sz+.i{margin-left:4px}
.g3 .i{width:30px;margin-right:5px;border-radius:5px}.on{background:#e6e6e6}
.g4 .d{width:52px;padding-left:7px}
.sel{display:grid;height:30px;align-items:center;flex:none;border:1px solid #bdbdbd;border-radius:5px}
.sel>*{grid-area:1/1}.sel select{padding-left:11px;width:100%;height:28px}.sel ui-icon{justify-self:end;margin-right:6px;pointer-events:none}
.fs{width:190px;margin-left:4px;border-radius:5px 0 0 5px}.sz{width:77px;margin-left:-1px;border-radius:0 5px 5px 0}.nf{width:100px}
.w{height:30px;padding:0 7px;gap:5px;border-radius:5px;white-space:nowrap}
.g3 .w{margin-left:-1px}.g4 .w{padding-left:12px}
.k{font-size:12px;line-height:11px;font-weight:600;width:35px;flex-direction:column;color:#333}
.pc{font-size:18px;width:35px}
.g5{width:49px;overflow:hidden;padding-left:17px;border:0}.g5 .row{gap:5px;width:60px}
.mo{width:24px;border-radius:6px;background:#efefef}
`, `<section class="g1"><button class="big">${ic('brush')}<span>格式刷</span></button><button class="big">${ic('paste')}<span>粘贴${ic('chev')}</span></button><div class="c"><div class="row"><button aria-label="Cut">${ic('cut')}</button></div><div class="row"><button aria-label="Copy">${ic('copy')}</button>${ic('chev')}</div></div>${ic('launch')}</section>
<section class="g2"><div class="row"><div class="sel fs"><select aria-label="Font"><option>宋体</option></select>${ic('thin')}</div><div class="sel sz"><select aria-label="Font size"><option>12</option></select>${ic('thin')}</div>${cell('aplus')}${cell('aminus')}</div><div class="row">${['bold','italic','under','strike'].map(cell).join('')}${['border','fill','fcolor','eraser'].map(drop).join('')}</div>${ic('launch')}</section>
<section class="g3"><div class="row">${cell('vtop')}${cell('vmid').replace('"i"','"i on"')}${cell('vbot')}${cell('outdent')}${cell('indent')}<button class="w on">${ic('wrap')}换行</button></div><div class="row">${cell('left').replace('"i"','"i on"')}${cell('center')}${cell('ralign')}${cell('justify')}${cell('dist')}<button class="w">${ic('merge')}合并${ic('chev')}</button></div>${ic('launch')}</section>
<section class="g4"><div class="row"><div class="sel nf"><select aria-label="Number format"><option>常规</option></select>${ic('thin')}</div><button class="w">${ic('convert')}转换${ic('chev')}</button></div><div class="row">${drop('yen')}<button class="pc">%</button><button class="k"><span>000</span><span>,</span></button><button class="k"><span>←.0</span><span>.00</span></button><button class="k"><span>.00</span><span>→.0</span></button></div>${ic('launch')}</section>
<section class="g5"><div class="row">${ic('rows')}行</div><div class="row">${ic('tbl')}工</div></section><button class="mo" aria-label="More">${ic('more')}</button>`);

define('formula-bar', `
:host{display:flex;gap:11px;height:50px;padding:8px 16px 8px 16px;flex:none}
.n,.f{background:#fff;border:1px solid #cfcfcf;border-radius:8px;display:flex;align-items:center;height:34px}
.n{width:284px;padding-right:8px}.n input{flex:1;text-align:center;font:16px Lato,sans-serif;min-width:0;padding-right:2px}
.f{flex:1;padding-left:28px;gap:18px}.f i{font:italic 19px "Liberation Serif",serif}
.f input{flex:1;border-left:1px solid #c8c8c8;padding-left:10px;height:22px;font:15px "Liberation Mono",monospace}
`, `<div class="n"><input aria-label="Name box" value="C15">${ic('thin')}</div><div class="f">${ic('zoomin')}<i>fx</i><input aria-label="Formula" value="output"></div>`);

/* CJK runs are set larger than the Latin monospace so that two Latin cells equal one ideograph */
const mix = t => t.replace(/[\u2014\u3000-\u9fff\uff00-\uffef]+/g, m => `<span class="z">${m}</span>`);
const ROWS = [
  ['h','序号','信号名','方向','管脚','端口说明'],['s','系统时钟（50MHz）'],['r','1','CLK1','input','PIN_23','系统时钟，频率：50MHz'],['s','系统复位'],['r','1','RESET','input','PIN_24','系统复位，低电平有效'],
  ['s','七彩LED灯'],['r','1','LED_B_F','output','PIN_7','七彩RGB-LED灯的B端控制信号'],['r','2','LED_G_F','output','PIN_10','七彩RGB-LED灯的G端控制信号'],['r','3','LED_R_F','output','PIN_11','七彩RGB-LED灯的R端控制信号'],
  ['s','通信接口与下载配置'],['r','1','USART1_TX','output','PIN_1','FPGA串口数据发送端口'],['r','2','USART1_RX','input','PIN_2','FPGA串口数据接收端口'],['r','3','nCSO','output','PIN_8','配置芯片的片选信号'],['r','4','DCLK','output','PIN_12','配置芯片的时钟信号'],
  ['r','5','ASDO','output','PIN_6','配置芯片的输入信号'],['r','6','DATA','input','PIN_13','配置芯片的输出信号'],['r','7','TCK','input','PIN_16','测试时钟'],['r','8','TDO','output','PIN_20','测试数据串行输出'],['r','9','TMS','input','PIN_18','测试模式选择'],['r','10','TDI','input','PIN_15','测试数据串行输入'],
  ['s','按键'],['r','1','K1','input','PIN_91','按键1输入'],['r','','','','','']];
define('sheet-view', `
:host{display:flex;flex:1;min-height:0;border-bottom:1px solid #d5d5d5}
.g{flex:1;overflow:hidden;min-width:0}
table{table-layout:fixed;width:1451px;border-collapse:separate;border-spacing:0;font:22px "Liberation Mono","Noto Sans CJK SC",monospace;color:#111}
thead th{height:33px;border-right:1px solid #d9d9d9;border-bottom:1px solid #d0d0d0}
th{font:400 20px Lato,sans-serif;color:#555;background:#eee;padding:0}
thead .on{background:#d9d9d9;color:#0c7f68;border-bottom:2px solid #43911f}
tbody th{border-right:1px solid #d5d5d5;border-bottom:1px solid #d9d9d9}
tbody .on{background:#d9d9d9;color:#0c7f68}
td{padding:0;border-right:2px solid #000;border-bottom:2px solid #000;white-space:nowrap}
td>div{height:33px;line-height:25px;padding:8px 0 0 4px}
.z{font-size:26px;line-height:0;font-family:"Noto Sans CJK SC",sans-serif;font-weight:300}
.h td{background:#92d050}.r td{background:#d9e1f2}.s td{background:#fabf8f;color:red;font-weight:700}.s .z{font-weight:500}.s .a{border-bottom-width:0}
.c15 td:nth-child(4){outline:2px solid #43911f;outline-offset:-1px}
.t0{height:124px;background:#cce8cf}.t1{background:#fff;border-right:0}
.t1>.ti{height:122px;padding:16px 0 0 399px;line-height:55px;color:#c00000;font-size:39px}
.ti .z{font-size:43px}.ti b{display:block;font-weight:400}.ti b+b{padding-left:195px}
.t0>div{height:122px;padding:6px 0 0 8px}
svg{display:block;position:relative;z-index:1}
.v{width:21px;background:#e6e6e6;border-left:1px solid #dadada;display:flex;flex-direction:column;align-items:center;padding:40px 0 9px;font-size:9px;color:#777}
.v i{width:10px;height:2px;background:#aaa}.v b{width:10px;height:192px;background:#c8c8c8;border-radius:5px;margin-top:8px}.v u{text-decoration:none;line-height:10px}.v .e{margin-top:auto}.v .s{margin-top:10px}
`, () => `<div class="g"><table><colgroup><col style="width:56px"><col style="width:74px"><col style="width:218px"><col style="width:170px"><col style="width:103px"><col style="width:830px"></colgroup>
<thead><tr><th><svg width="55" height="14"><path d="M34 3v10H24z" fill="#666"/></svg></th><th>A</th><th>B</th><th class="on">C</th><th>D</th><th>E</th></tr></thead><tbody>
<tr><th>1</th><td class="t0"><div><svg width="421" height="113" viewBox="0 0 421 113"><defs><linearGradient id="l" x2="0" y2="1"><stop stop-color="#8a93b8"/><stop offset="1" stop-color="#1f1a9a"/></linearGradient><linearGradient id="n" x2="0" y2="1"><stop stop-color="#1e3fd0"/><stop offset="1" stop-color="#0a0a5c"/></linearGradient></defs><rect width="421" height="113" fill="#f3f3f3"/><ellipse cx="60" cy="48" rx="60" ry="41" fill="#1467e2"/><ellipse cx="68" cy="48" rx="50.500" ry="33" fill="#f3f3f3"/><g font-family="Liberation Serif,serif" fill="url(#l)"><text x="33" y="75" font-size="80">L</text><text x="65" y="76" font-size="70">Z</text></g><g font-family="Noto Sans CJK SC,sans-serif" font-weight="900" font-size="38" fill="url(#n)"><text x="124" y="60">凌</text><text x="190" y="60">智</text><text x="258" y="60">电</text><text x="326" y="60">子</text></g><path d="M118 73h243" stroke="#14146e" stroke-width="2" stroke-dasharray="17 7.300"/><g font-family="Liberation Serif,serif" font-size="24" fill="#17177c" stroke="#17177c" stroke-width=".4"><text x="105" y="97">LOCKZHINER</text><text x="274" y="97">Electronic</text></g></svg></div></td><td class="t1" colspan="4"><div class="ti"><b>EP4CE10E22 IO<span class="z">引脚分配表</span></b><b><span class="z">——福州市凌睿智</span></b></div></td></tr>
${ROWS.map(([k, ...v], i) => `<tr class="${k}${i === 13 ? ' c15' : ''}"><th class="${i === 13 ? 'on' : ''}">${i === 22 ? '' : i+2}</th>${k === 's' ? `<td class="a"><div></div></td><td colspan="4"><div>${mix(v[0])}</div></td>` : v.map(x => `<td><div>${mix(x)}</div></td>`).join('')}</tr>`).join('')}
</tbody></table></div><div class="v"><i></i><u class="s">▲</u><b></b><u class="e">▼</u></div>`);

define('sheet-tabs', `
:host{display:flex;align-items:center;height:32px;background:#e3e3e3;flex:none;padding-left:16px}
.n{display:flex;gap:12px}.t{height:30px;width:119px;background:#fff;border-radius:0 0 6px 6px;color:#0c7f68;font-weight:700;font-size:15px;align-self:flex-start;margin:0 8px 0 12px}
.p{flex:1;justify-content:flex-start}
.s{display:flex;align-items:center;width:417px;font-size:9px;color:#777}
.s b{width:187px;height:10px;border-radius:5px;background:#c8c8c8;margin:0 auto 0 9px}.s i{width:1px;height:12px;background:#999;margin:0 24px 0 14px}
`, `<div class="n">${['nfirst','nprev','nnext','nlast'].map(ic).join('')}</div><button class="t">EP4CE10E22</button><button class="p" aria-label="Add sheet">${ic('add')}</button><div class="s"><span>◀</span><b></b><span>▶</span><i></i></div>`);

define('side-tools', `:host{flex:1;display:flex;flex-direction:column;align-items:center;gap:28px;padding-top:60px;background:#e3e3e3;border-left:1px solid #cfcfcf}button{height:22px}`,
  ['cursor','sliders','crop','gallery','tools','book','help','dots3'].map(n => `<button aria-label="${n}">${ic(n)}</button>`).join(''));

define('wps-status', `
:host{display:flex;align-items:center;height:30px;background:#e3e3e3;border-top:1px solid #c6c6c6;padding:0 19px 0 20px;flex:none}
hr{width:1px;height:18px;border:0;background:#c5c5c5;margin:0 10px 0 15px}
.o{margin-left:16px;flex:1;justify-content:flex-start}.h{width:30px;height:30px;border-radius:5px}.on{background:#cfcfcf}
.v{display:flex;gap:10px;margin-right:-5px}.e{gap:4px;margin:0 2px 0 17px}.z{gap:14px;margin:0 22px 0 9px}
label{display:flex;margin:0 16px}
input{appearance:none;width:132px;height:14px;background:linear-gradient(90deg,#1f5fd0 54%,#aaa 54%) center/100% 2px no-repeat}
input::-webkit-slider-thumb{appearance:none;width:12px;height:12px;border-radius:50%;background:#888;border:3px solid #fff;box-shadow:0 0 2px #777}
.l{margin-left:24px}
`, `<button aria-label="Macro">${ic('vb')}</button><hr><span>滚动锁定</span><button class="o" aria-label="Outline">${ic('outline')}</button><button class="h on" aria-label="Eye">${ic('eye')}</button><button class="e" aria-label="Focus">${ic('target')}${ic('chev')}</button><hr><div class="v"><button class="h on" aria-label="Normal">${ic('grid')}</button><button class="h" aria-label="Split">${ic('two')}</button><button class="h" aria-label="Page">${ic('page')}</button></div><hr><button class="z">130%${ic('chev')}</button><button aria-label="Zoom out">${ic('sub')}</button><label><input type="range" aria-label="Zoom" value="54"></label><button aria-label="Zoom in">${ic('zplus')}</button><button class="l" aria-label="Full screen">${ic('full')}</button>`);

define('ime-bar', `
:host{position:absolute;top:256px;left:2246px;right:0;height:42px;display:flex;align-items:center;overflow:hidden}
.l{z-index:1;flex:none}.b{flex:none;margin-left:-20px;width:240px;height:32px;background:#fff;border:1px solid #b5cbe5;display:flex;align-items:center;gap:11px;padding-left:25px;color:#0b6bd6;font:700 19px "Noto Sans CJK SC",sans-serif}
`, `<div class="l">${ic('sogou')}</div><div class="b"><span>中</span>${['punct','mic','kbd','shirt','apps','face'].map(ic).join('')}</div>`);

define('callout-layer', `:host{position:absolute;inset:0;pointer-events:none;overflow:hidden}svg{display:block}`,
`<svg width="2491" height="1358" viewBox="0 0 2491 1358"><g fill="none" stroke="#ff5262" stroke-width="7"><rect x="1425.500" y="679.500" width="879" height="53" rx="3"/><rect x="1822.500" y="661.500" width="114" height="88" rx="3"/><rect x="1381.500" y="1150.500" width="864" height="81" rx="3"/><rect x="1822.500" y="1124.500" width="133" height="114" rx="3"/></g>
<g fill="#ff5262"><path d="M322 1170L366 1112.500L373 1129L1410 726L387 1163.500L392 1179z"/><path d="M351 1203L412.500 1164L413.500 1182L1358 1152L415.500 1218L416 1236.500z"/></g></svg>`);

define('water-mark', `:host{position:absolute;right:2px;bottom:17px;font:45px/50px "Liberation Sans",sans-serif;color:rgba(235,235,235,.75);text-shadow:1px 1px 1px #888,-1px -1px 1px #fff;white-space:nowrap;pointer-events:none}`, '<slot></slot>');
</script>
</body>
</html>
